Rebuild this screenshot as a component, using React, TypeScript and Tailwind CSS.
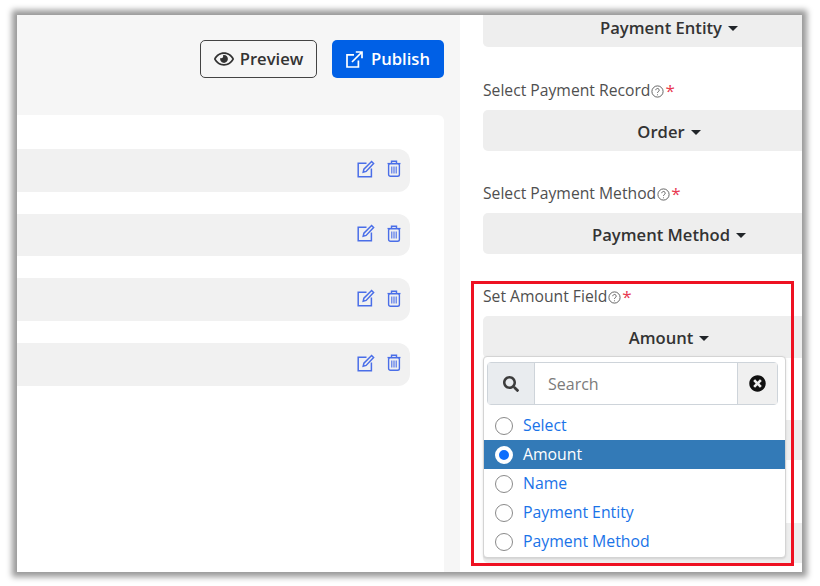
import { FaRegEye, FaSearch, FaTimesCircle } from 'react-icons/fa';

const font = { fontFamily: '"Open Sans", "Noto Sans", sans-serif' };

function EditIcon({ className }: { className?: string }) {
  return (
    <svg viewBox="0 0 18 18" width="18" height="18" fill="none" stroke="currentColor" strokeWidth="1.5" className={className}>
      <path d="M9.5 3.2H1.2v13.6h13.2V8.5" />
      <path d="M6.2 12.2l.7-3L14.6 1.5l2 2-7.5 7.9z" />
    </svg>
  );
}

function TrashIcon({ className }: { className?: string }) {
  return (
    <svg viewBox="0 0 14 17" width="14" height="17" fill="none" stroke="currentColor" strokeWidth="1.4" className={className}>
      <path d="M.5 3.6h13" />
      <path d="M4.5 3.4V1.2h5v2.2" />
      <rect x="1.6" y="3.6" width="10.8" height="12.6" rx="1.8" />
      <path d="M4.8 6.5v7M7 6.5v7M9.2 6.5v7" strokeWidth="1.1" />
    </svg>
  );
}

function PublishIcon() {
  return (
    <svg viewBox="0 0 17 17" width="17" height="17" fill="none" stroke="currentColor" strokeWidth="1.7">
      <path d="M8 3.8H1v12.2h11.4V9.5" />
      <path d="M6 11L15.5 1.5M9.8 1h6.2v6.2" />
    </svg>
  );
}

function HelpIcon() {
  return (
    <svg viewBox="0 0 13 13" width="13" height="13" fill="none" stroke="#555" strokeWidth="0.9" className="mt-px">
      <circle cx="6.5" cy="6.5" r="5.6" />
      <path d="M4.8 5.2a1.7 1.7 0 1 1 2.6 1.4c-.6.4-.9.6-.9 1.3" />
      <circle cx="6.5" cy="9.7" r=".5" fill="#555" stroke="none" />
    </svg>
  );
}

function Caret() {
  return <span className="ml-[6px] inline-block h-0 w-0 border-x-[5px] border-t-[5px] border-x-transparent border-t-[#212529]" />;
}

function Row() {
  return (
    <div className="flex h-[42.5px] w-[393px] items-center justify-end gap-[12px] rounded-r-xl bg-[#f1f1f1] pb-[3px] pr-[9px] text-[#4a6ee8]">
      <EditIcon />
      <TrashIcon />
    </div>
  );
}

function SelectButton({ label, top = 0 }: { label: string; top?: number }) {
  return (
    <div
      className="flex h-[41px] w-[372px] shrink-0 items-center justify-center rounded-[5px] bg-[#eeeeee] pt-[3px] text-[16.6px] font-semibold text-[#333]"
      style={top ? { marginTop: top } : undefined}
    >
      {label}
      <Caret />
    </div>
  );
}

function FieldLabel({ text }: { text: string }) {
  return (
    <div className="flex h-[20px] items-center text-[15.7px] text-[#4f4f4f]">
      {text}
      <span className="ml-px"><HelpIcon /></span>
      <span className="ml-px text-[17px] text-[#e8384f]">*</span>
    </div>
  );
}

function Option({ label, active }: { label: string; active?: boolean }) {
  return (
    <div className={`flex h-[29px] items-center pl-[11px] text-[15.8px] ${active ? 'bg-[#337ab7] text-white' : 'text-[#1a73e8]'}`}>
      {active ? (
        <span className="h-[18px] w-[18px] rounded-full border-[4px] border-white bg-[#0d6efd]" />
      ) : (
        <span className="h-[18px] w-[18px] rounded-full border border-[#8a8a8a] bg-white" />
      )}
      <span className="ml-[10px]">{label}</span>
    </div>
  );
}

export default function App() {
  return (
    <div className="h-[586px] w-[820px] bg-white pl-[17px] pt-[15px]" style={font}>
      <div className="relative flex h-[557px] w-[785px] shadow-[0_0_6px_5px_#9a9a9a]">
        <div className="flex w-[443px] shrink-0 flex-col bg-[#f6f6f6]">
          <div className="flex h-[100px] shrink-0 items-start justify-end gap-[15px] pr-[16px] pt-[25px]">
            <div className="flex h-[38px] w-[117px] items-center justify-center gap-[6px] rounded-[5px] border border-[#444] text-[16.6px] font-semibold text-[#333]">
              <FaRegEye size={20} />
              Preview
            </div>
            <div className="flex h-[38px] w-[112px] items-center justify-center gap-[8px] rounded-[5px] bg-[#0060e6] text-[16.6px] font-semibold text-white">
              <PublishIcon />
              Publish
            </div>
          </div>
          <div className="mr-[16px] flex grow flex-col gap-[22.2px] rounded-tr-[6px] bg-white pt-[34px]">
            <Row />
            <Row />
            <Row />
            <Row />
          </div>
        </div>

        <div className="flex grow flex-col overflow-hidden bg-white pl-[23px]">
          <div className="-mt-[9px] flex h-[41px] w-[372px] shrink-0 items-center justify-center rounded-[5px] bg-[#eeeeee] pt-[4px] text-[16.6px] font-semibold text-[#333]">
            Payment Entity
            <Caret />
          </div>
          <div className="mt-[34px]"><FieldLabel text="Select Payment Record" /></div>
          <SelectButton label="Order" top={9} />
          <div className="mt-[33px]"><FieldLabel text="Select Payment Method" /></div>
          <SelectButton label="Payment Method" top={9} />
          <div className="mt-[33px]"><FieldLabel text="Set Amount Field" /></div>
          <div className="mt-[9px] flex h-[42px] w-[372px] shrink-0 items-center justify-center rounded-[5px] bg-[#eeeeee] pt-[3px] text-[16.6px] font-semibold text-[#333]">
            Amount
            <Caret />
          </div>
          <div className="mt-[62px] h-[40px] w-[372px] shrink-0 rounded-[5px] bg-[#eeeeee]" />
          <div className="mt-[63px] h-[40px] w-[372px] shrink-0 rounded-[5px] bg-[#eeeeee]" />
        </div>

        <div className="absolute left-[466px] top-[341px] w-[303px] rounded-[4px] border border-[#d4d4d4] bg-white pb-px shadow-sm">
          <div className="mb-[6px] ml-[3px] mr-[7px] mt-[5px] flex h-[43px] rounded-[4px] border border-[#ced4da] text-[16px]">
            <div className="flex w-[46px] items-center justify-center bg-[#e9ecef] text-[#3c3c3c]">
              <FaSearch size={16} />
            </div>
            <div className="flex grow items-center border-x border-[#ced4da] bg-white pl-[13px] text-[#7b7b7b]">Search</div>
            <div className="flex w-[39px] items-center justify-center bg-[#f0f0f0] text-[#111]">
              <FaTimesCircle size={17} />
            </div>
          </div>
          <Option label="Select" />
          <Option label="Amount" active />
          <Option label="Name" />
          <Option label="Payment Entity" />
          <Option label="Payment Method" />
        </div>

        <div className="absolute left-[454px] top-[266px] h-[285px] w-[323px] border-[3px] border-[#ee1122]" />
      </div>
    </div>
  );
}
